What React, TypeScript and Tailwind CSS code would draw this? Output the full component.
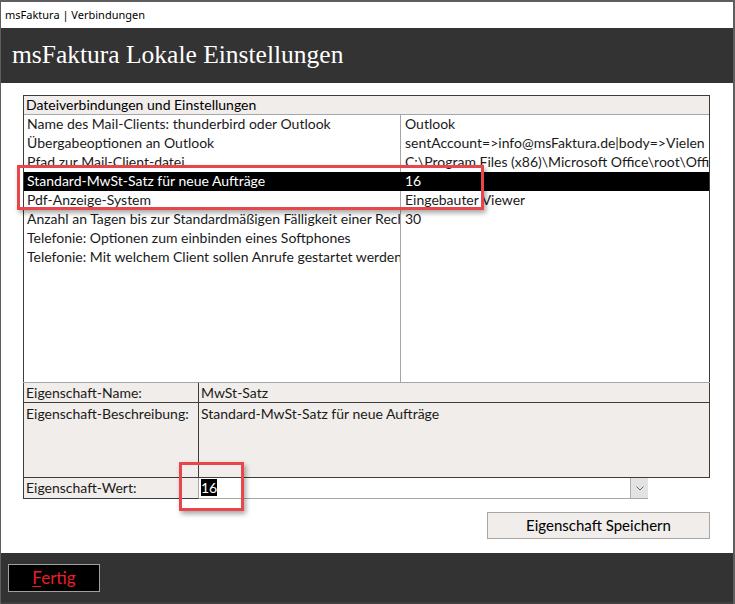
import React from "react";

const rows: [string, string][] = [
  ["Name des Mail-Clients: thunderbird oder Outlook", "Outlook"],
  ["Übergabeoptionen an Outlook", "sentAccount=>info@msFaktura.de|body=>Vielen Dank für Ihren Auftrag"],
  ["Pfad zur Mail-Client-datei", "C:\\Program Files (x86)\\Microsoft Office\\root\\Office16\\OUTLOOK.EXE"],
  ["Standard-MwSt-Satz für neue Aufträge", "16"],
  ["Pdf-Anzeige-System", "Eingebauter Viewer"],
  ["Anzahl an Tagen bis zur Standardmäßigen Fälligkeit einer Rechnung", "30"],
  ["Telefonie: Optionen zum einbinden eines Softphones", ""],
  ["Telefonie: Mit welchem Client sollen Anrufe gestartet werden", ""],
];

const SELECTED = 3;
const ui = "font-['Lato',_'Noto_Sans',_sans-serif]";

export default function App() {
  return (
    <div className="w-[735px] h-[604px] flex flex-col overflow-hidden border-t-2 border-l border-r-2 border-[#5e5e5e] bg-white">
      {/* window title */}
      <div className="h-[26px] shrink-0 flex items-center px-[4px] text-[11px] text-black font-['Noto_Sans',_sans-serif]">
        msFaktura | Verbindungen
      </div>

      {/* form header */}
      <div className="h-[55px] shrink-0 bg-[#333333] flex items-center px-[11px] pb-[2px]">
        <h1 className="text-white text-[25.5px] font-['Liberation_Serif',_serif] leading-none">
          msFaktura Lokale Einstellungen
        </h1>
      </div>

      {/* detail */}
      <div className={`relative flex-1 flex flex-col pt-[12px] pl-[22px] pr-[23px] ${ui} text-[14px] text-[#1a1a1a]`}>
        {/* list box */}
        <div className="h-[287px] flex flex-col border border-[#3c3c3c] border-b-0">
          <div className="h-[19px] shrink-0 bg-[#f0edea] border-b border-[#a6a6a6] px-[2px] leading-[18px] text-black">
            Dateiverbindungen und Einstellungen
          </div>
          {rows.map(([k, v], i) => {
            const sel = i === SELECTED;
            return (
              <div
                key={k}
                className={`h-[19px] shrink-0 grid grid-cols-[377px_1fr] leading-[18px] whitespace-nowrap ${sel ? "bg-black text-white" : ""}`}
              >
                <div className={`overflow-hidden pl-[3px] border-r ${sel ? "border-black" : "border-[#a6a6a6]"}`}>{k}</div>
                <div className="overflow-hidden pl-[4px]">{v}</div>
              </div>
            );
          })}
          <div className="flex-1 grid grid-cols-[377px_1fr]">
            <div className="border-r border-[#a6a6a6]" />
            <div />
          </div>
        </div>

        {/* properties */}
        <div className="flex flex-col">
          <div className="grid grid-cols-[176px_1fr] border-t border-b border-[#a6a6a6] border-b-[#3c3c3c] bg-[#f0edea]">
            <div className="h-[19px] leading-[19px] pl-[2px] border-l border-[#3c3c3c] border-r">Eigenschaft-Name:</div>
            <div className="h-[19px] leading-[19px] pl-[2px] border-r border-[#3c3c3c]">MwSt-Satz</div>
          </div>
          <div className="grid grid-cols-[176px_1fr] h-[75px] border-b border-[#3c3c3c] bg-[#f0edea]">
            <div className="leading-[19px] pl-[2px] pt-[1px] border-l border-r border-[#3c3c3c]">Eigenschaft-Beschreibung:</div>
            <div className="leading-[19px] pl-[2px] pt-[1px] border-r border-[#3c3c3c]">Standard-MwSt-Satz für neue Aufträge</div>
          </div>
          <div className="flex h-[21px]">
            <div className="w-[176px] leading-[19px] pl-[2px] bg-[#f0edea] border-l border-b border-r border-[#3c3c3c] border-r-[#a6a6a6]">
              Eigenschaft-Wert:
            </div>
            <div className="w-[449px] flex border-b border-[#a6a6a6] bg-white">
              <div className="flex-1 pl-[2px] leading-[19px]">
                <span className="bg-black text-white">16</span>
              </div>
              <div className="w-[18px] h-[20px] bg-[#e3e3e3] border-l border-[#b0b0b0] flex items-center justify-center">
                <svg width="8" height="5" viewBox="0 0 8 5" fill="none" stroke="#6a6a6a" strokeWidth="1">
                  <path d="M0.5 0.5 L4 4 L7.5 0.5" />
                </svg>
              </div>
            </div>
          </div>
        </div>

        {/* save button */}
        <div className="flex justify-end mt-[13px]">
          <button className="w-[223px] h-[27px] bg-[#f0edea] border border-[#a6a6a6] text-[15px] text-black leading-none">
            Eigenschaft Speichern
          </button>
        </div>

        {/* annotations */}
        <div className="absolute left-[16px] top-[82px] w-[467px] h-[45px] border-[3px] border-[#e8464b] shadow-[2px_3px_5px_rgba(0,0,0,0.35)] pointer-events-none" />
        <div className="absolute left-[178px] top-[379px] w-[65px] h-[49px] border-[3px] border-[#e8464b] shadow-[2px_3px_5px_rgba(0,0,0,0.35)] pointer-events-none" />
      </div>

      {/* footer */}
      <div className="h-[51px] shrink-0 bg-[#333333] border-b-2 border-[#3f3f3f] flex items-center px-[7px]">
        <button className={`w-[92px] h-[28px] bg-black border border-[#a0a0a0] text-[#e81f2a] text-[17px] ${ui}`}>
          <span className="underline underline-offset-2">F</span>ertig
        </button>
      </div>
    </div>
  );
}
